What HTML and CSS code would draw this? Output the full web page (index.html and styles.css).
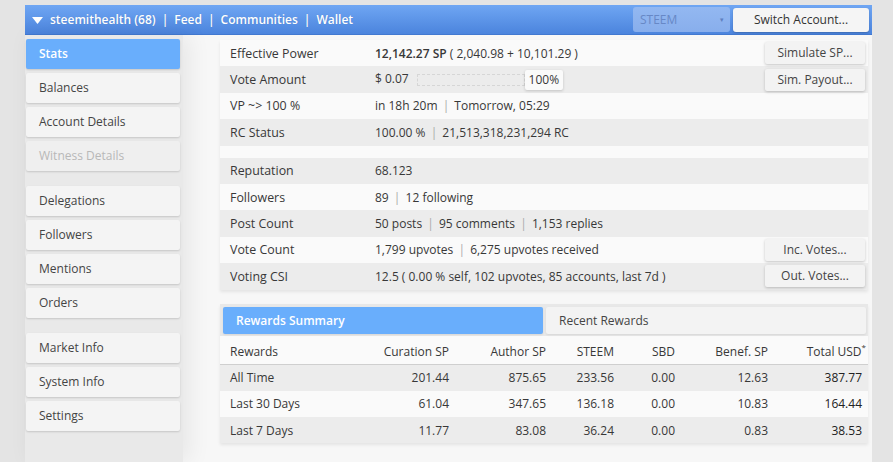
FILE: index.html
```html
<!DOCTYPE html>
<html lang="en">
<head>
  <meta charset="UTF-8">
  <title>SteemWorld - Stats</title>
  <link rel="stylesheet" href="styles.css">
</head>
<body>
  <div class="app">
    <!-- Top bar -->
    <div class="topbar">
      <div class="nav">
        <svg class="caret" width="11" height="7" viewBox="0 0 11 7"><path d="M0 0 H11 L5.5 7 Z" fill="#fff"/></svg>
        <span>steemithealth (68)</span>
        <span>|</span>
        <span>Feed</span>
        <span>|</span>
        <span>Communities</span>
        <span>|</span>
        <span>Wallet</span>
      </div>
      <div class="chain-select">STEEM <span class="arrow">&#9662;</span></div>
      <div class="switch-btn">Switch Account...</div>
    </div>

    <div class="main">
      <!-- Sidebar menu -->
      <div class="sidebar">
        <div class="menu-group">
          <div class="menu-btn active">Stats</div>
          <div class="menu-btn">Balances</div>
          <div class="menu-btn">Account Details</div>
          <div class="menu-btn disabled">Witness Details</div>
        </div>
        <div class="menu-group">
          <div class="menu-btn">Delegations</div>
          <div class="menu-btn">Followers</div>
          <div class="menu-btn">Mentions</div>
          <div class="menu-btn">Orders</div>
        </div>
        <div class="menu-group">
          <div class="menu-btn">Market Info</div>
          <div class="menu-btn">System Info</div>
          <div class="menu-btn">Settings</div>
        </div>
      </div>

      <!-- Stats -->
      <div class="content">
        <div class="panel">
          <div class="row">
            <div class="label">Effective Power</div>
            <div class="value"><b>12,142.27 SP</b> ( 2,040.98 + 10,101.29 )</div>
            <div class="action"><span class="small-btn">Simulate SP...</span></div>
          </div>
          <div class="row">
            <div class="label">Vote Amount</div>
            <div class="value">$ 0.07 <span class="vote-bar"></span><span class="badge">100%</span></div>
            <div class="action"><span class="small-btn">Sim. Payout...</span></div>
          </div>
          <div class="row">
            <div class="label">VP ~&gt; 100 %</div>
            <div class="value">in 18h 20m <span class="sep">|</span> Tomorrow, 05:29</div>
          </div>
          <div class="row">
            <div class="label">RC Status</div>
            <div class="value">100.00 % <span class="sep">|</span> 21,513,318,231,294 RC</div>
          </div>

          <div class="spacer"></div>

          <div class="row">
            <div class="label">Reputation</div>
            <div class="value">68.123</div>
          </div>
          <div class="row">
            <div class="label">Followers</div>
            <div class="value">89 <span class="sep">|</span> 12 following</div>
          </div>
          <div class="row">
            <div class="label">Post Count</div>
            <div class="value">50 posts <span class="sep">|</span> 95 comments <span class="sep">|</span> 1,153 replies</div>
          </div>
          <div class="row">
            <div class="label">Vote Count</div>
            <div class="value">1,799 upvotes <span class="sep">|</span> 6,275 upvotes received</div>
            <div class="action"><span class="small-btn">Inc. Votes...</span></div>
          </div>
          <div class="row">
            <div class="label">Voting CSI</div>
            <div class="value">12.5 ( 0.00 % self, 102 upvotes, 85 accounts, last 7d )</div>
            <div class="action"><span class="small-btn">Out. Votes...</span></div>
          </div>
        </div>

        <!-- Rewards -->
        <div class="panel rewards">
          <div class="tabs">
            <div class="tab active">Rewards Summary</div>
            <div class="tab">Recent Rewards</div>
          </div>
          <div class="rtable">
            <div class="rrow head">
              <div>Rewards</div>
              <div class="num">Curation SP</div>
              <div class="num">Author SP</div>
              <div class="num">STEEM</div>
              <div class="num">SBD</div>
              <div class="num">Benef. SP</div>
              <div class="num last">Total USD<sup>*</sup></div>
            </div>
            <div class="rrow">
              <div>All Time</div>
              <div class="num">201.44</div>
              <div class="num">875.65</div>
              <div class="num">233.56</div>
              <div class="num">0.00</div>
              <div class="num">12.63</div>
              <div class="num total">387.77</div>
            </div>
            <div class="rrow">
              <div>Last 30 Days</div>
              <div class="num">61.04</div>
              <div class="num">347.65</div>
              <div class="num">136.18</div>
              <div class="num">0.00</div>
              <div class="num">10.83</div>
              <div class="num total">164.44</div>
            </div>
            <div class="rrow">
              <div>Last 7 Days</div>
              <div class="num">11.77</div>
              <div class="num">83.08</div>
              <div class="num">36.24</div>
              <div class="num">0.00</div>
              <div class="num">0.83</div>
              <div class="num total">38.53</div>
            </div>
          </div>
        </div>
      </div>
    </div>
  </div>
</body>
</html>
```

FILE: styles.css
```css
body {
  margin: 0;
  background: #e4e4e4;
  font-family: 'Open Sans', sans-serif;
  font-size: 12px;
  color: #383838;
}

.app {
  margin: 5px 0 0 25px;
  width: 847px;
}

/* Top bar */
.topbar {
  height: 30px;
  display: flex;
  align-items: center;
  background: linear-gradient(#6fa6f3, #4b84dd);
  border-bottom: 1px solid #4178d0;
  box-sizing: border-box;
  padding: 0 3px 0 7px;
}

.nav {
  flex: 1;
  display: flex;
  align-items: center;
  gap: 6px;
  color: #fff;
  font-weight: 600;
  text-shadow: 0 0 1px rgba(0,0,0,0.15);
}

.nav .caret {
  margin-right: 1px;
  margin-top: 1px;
}

.chain-select {
  width: 97px;
  height: 25px;
  box-sizing: border-box;
  padding: 0 6px 0 7px;
  margin-right: 3px;
  display: flex;
  align-items: center;
  justify-content: space-between;
  background: linear-gradient(#93b8f1, #88aeec);
  border-radius: 3px;
  color: #6788c6;
}

.chain-select .arrow {
  font-size: 7px;
  color: #5f7fbf;
}

.switch-btn {
  width: 136px;
  height: 24px;
  line-height: 24px;
  text-align: center;
  background: #f5f5f5;
  border-radius: 3px;
  box-shadow: 0 1px 2px rgba(0,0,0,0.2);
  color: #333;
}

/* Main */
.main {
  display: flex;
  background: #f7f7f7;
  height: 427px;
}

.sidebar {
  width: 158px;
  background: #e9e9e9;
  padding: 4px 3px 0 1px;
  box-sizing: border-box;
  box-shadow: 6px 0 22px rgba(0,0,0,0.07);
}

.menu-group {
  display: flex;
  flex-direction: column;
  gap: 4px;
  margin-bottom: 15px;
}

.menu-btn {
  height: 30px;
  line-height: 30px;
  padding-left: 13px;
  background: #f4f4f4;
  border-radius: 2px;
  box-shadow: 0 1px 2px rgba(0,0,0,0.15);
  color: #444;
}

.menu-btn.active {
  background: #69aefc;
  color: #fff;
  font-weight: 600;
}

.menu-btn.disabled {
  color: #b8b8b8;
  background: #efefef;
}

.content {
  flex: 1;
  padding: 5px 4px 0 37px;
}

.panel {
  background: #fafafa;
  box-shadow: 0 2px 3px rgba(0,0,0,0.08);
}

.row {
  display: grid;
  grid-template-columns: 145px 1fr auto;
  align-items: center;
  height: 26.4px;
  padding-left: 10px;
}

.row:nth-child(even) {
  background: #ececec;
}

.spacer {
  height: 12px;
}

.label {
  font-size: 12.4px;
}

.sep {
  color: #aaa;
  margin: 0 2px;
}

.value b {
  font-weight: 600;
}

.action {
  padding-right: 3px;
}

.small-btn {
  display: inline-block;
  width: 100px;
  height: 22px;
  line-height: 22px;
  text-align: center;
  background: #f3f3f3;
  border-radius: 2px;
  box-shadow: 0 1px 3px rgba(0,0,0,0.22);
  color: #444;
}

.vote-bar {
  display: inline-block;
  width: 106px;
  height: 10px;
  margin-left: 5px;
  vertical-align: middle;
  border: 1px dashed #d6d6d6;
}

.badge {
  display: inline-block;
  width: 38px;
  height: 20px;
  line-height: 20px;
  text-align: center;
  background: #fafafa;
  border-radius: 2px;
  box-shadow: 0 1px 3px rgba(0,0,0,0.18);
  vertical-align: middle;
}

/* Rewards */
.rewards {
  margin-top: 14px;
}

.tabs {
  display: flex;
  gap: 3px;
  padding: 3px 2px 2px 3px;
  background: #e8e8e8;
}

.tab {
  flex: 1;
  height: 27px;
  line-height: 27px;
  padding-left: 13px;
  background: #f3f3f3;
  border-radius: 2px;
  box-shadow: 0 1px 2px rgba(0,0,0,0.08);
  color: #444;
}

.tab.active {
  background: #69aefc;
  color: #fff;
  font-weight: 600;
}

.rtable {
  padding-top: 3px;
}

.rrow {
  display: grid;
  grid-template-columns: 150px 79px 97px 68px 61px 93px 1fr;
  align-items: center;
  height: 26.3px;
}

.rrow > div:first-child {
  padding-left: 10px;
}

.rrow.head {
  height: 25px;
  border-bottom: 1px solid #cfcfcf;
}

.rrow:nth-child(even) {
  background: #ececec;
}

.num {
  text-align: right;
}

.num.last {
  padding-right: 2px;
}

.num.total {
  padding-right: 6px;
  color: #222;
}

sup {
  font-size: 8px;
  vertical-align: 6px;
  line-height: 0;
}
```
